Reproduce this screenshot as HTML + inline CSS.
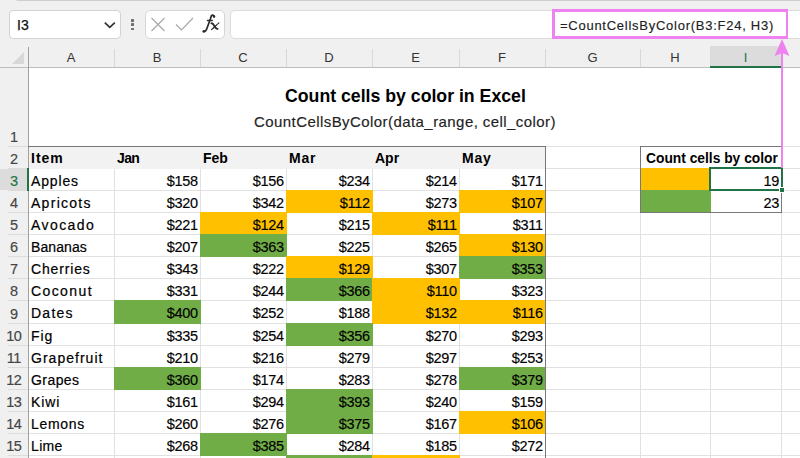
<!DOCTYPE html><html><head><meta charset="utf-8"><style>
*{margin:0;padding:0;box-sizing:border-box}
html,body{width:800px;height:458px;overflow:hidden;background:#f0f0f0;font-family:"Liberation Sans",sans-serif;position:relative}
.a{position:absolute}
.t{position:absolute;white-space:pre;line-height:1}
.cell{font-size:14px;letter-spacing:0.95px;color:#000;-webkit-text-stroke:0.2px #000}
.num{font-size:14.5px;letter-spacing:-0.3px;color:#000;text-align:right;-webkit-text-stroke:0.15px #000}
.hl{background:#e1e1e1}
</style></head><body>
<div class="a" style="left:14px;top:-6px;width:800px;height:7px;background:#fafafa;border:1px solid #cfcfcf;border-radius:6px"></div>
<div class="a" style="left:9px;top:10px;width:112px;height:29px;background:#fff;border:1px solid #d2d2d2;border-radius:4px"></div>
<div class="t" style="left:17px;top:18px;font-size:14px;color:#111;-webkit-text-stroke:0.25px #111">I3</div>
<svg class="a" style="left:103px;top:20px" width="14" height="10"><path d="M1.8 2.6 L6.8 7.4 L11.8 2.6" fill="none" stroke="#333" stroke-width="1.7"/></svg>
<div class="a" style="left:131.2px;top:19px;width:2.6px;height:2.6px;background:#707070;border-radius:0.5px"></div>
<div class="a" style="left:131.2px;top:23.3px;width:2.6px;height:2.6px;background:#707070;border-radius:0.5px"></div>
<div class="a" style="left:131.2px;top:27.6px;width:2.6px;height:2.6px;background:#707070;border-radius:0.5px"></div>
<div class="a" style="left:145px;top:10px;width:80px;height:29px;background:#fff;border:1px solid #d6d6d6;border-radius:5px"></div>
<svg class="a" style="left:150px;top:17px" width="16" height="15"><path d="M1.5 1 L14.5 14 M14.5 1 L1.5 14" stroke="#a8a8a8" stroke-width="1.2" fill="none"/></svg>
<svg class="a" style="left:175px;top:17px" width="19" height="14"><path d="M1 7.5 L6.5 13 L18 1" stroke="#a8a8a8" stroke-width="1.2" fill="none"/></svg>
<svg class="a" style="left:198px;top:10px" width="28" height="26"><g fill="none" stroke="#2b2b2b" stroke-linecap="round"><path d="M16.2 6.6 C15.9 5.2 14.8 4.7 13.9 5.3 C13.1 5.9 12.8 7.2 12.5 8.5 L9.0 18.3 C8.2 20.6 7.1 22.0 5.5 21.7" stroke-width="1.7"/><path d="M9.4 10.5 L14.3 10.5" stroke-width="1.3"/><path d="M13.4 13.3 C14.6 13.0 15.2 13.8 16.0 15.4 C17.0 17.4 17.9 19.2 19.6 18.9" stroke-width="1.9"/><path d="M20.9 12.9 C18.6 14.8 16.3 17.4 13.5 19.6" stroke-width="1.2"/></g><circle cx="16.0" cy="6.6" r="1.25" fill="#2b2b2b"/><circle cx="5.8" cy="21.2" r="1.2" fill="#2b2b2b"/></svg>
<div class="a" style="left:230px;top:10px;width:590px;height:29px;background:#fff;border:1px solid #dcdcdc;border-radius:5px"></div>
<div class="t" style="left:560px;top:19px;font-size:13px;letter-spacing:0.74px;color:#222;-webkit-text-stroke:0.15px #222">=CountCellsByColor(B3:F24, H3)</div>
<div class="a" style="left:552px;top:9px;width:236px;height:30px;border:3px solid #ee82ee;border-right-width:2.5px"></div>
<div class="a" style="left:710px;top:46px;width:71px;height:21px;background:#dcdcdc"></div>
<div class="t" style="left:28px;width:86px;top:51px;text-align:center;font-size:13px;color:#333">A</div>
<div class="a" style="left:114px;top:49px;width:1px;height:18px;background:#d8d8d8"></div>
<div class="t" style="left:114px;width:86px;top:51px;text-align:center;font-size:13px;color:#333">B</div>
<div class="a" style="left:200px;top:49px;width:1px;height:18px;background:#d8d8d8"></div>
<div class="t" style="left:200px;width:86px;top:51px;text-align:center;font-size:13px;color:#333">C</div>
<div class="a" style="left:286px;top:49px;width:1px;height:18px;background:#d8d8d8"></div>
<div class="t" style="left:286px;width:86px;top:51px;text-align:center;font-size:13px;color:#333">D</div>
<div class="a" style="left:372px;top:49px;width:1px;height:18px;background:#d8d8d8"></div>
<div class="t" style="left:372px;width:87px;top:51px;text-align:center;font-size:13px;color:#333">E</div>
<div class="a" style="left:459px;top:49px;width:1px;height:18px;background:#d8d8d8"></div>
<div class="t" style="left:459px;width:86px;top:51px;text-align:center;font-size:13px;color:#333">F</div>
<div class="a" style="left:545px;top:49px;width:1px;height:18px;background:#d8d8d8"></div>
<div class="t" style="left:545px;width:95px;top:51px;text-align:center;font-size:13px;color:#333">G</div>
<div class="a" style="left:640px;top:49px;width:1px;height:18px;background:#d8d8d8"></div>
<div class="t" style="left:640px;width:70px;top:51px;text-align:center;font-size:13px;color:#333">H</div>
<div class="a" style="left:710px;top:49px;width:1px;height:18px;background:#d8d8d8"></div>
<div class="t" style="left:710px;width:71px;top:51px;text-align:center;font-size:13px;color:#217346">I</div>
<svg class="a" style="left:10px;top:50px" width="16" height="16"><path d="M14 2 L14 14 L2 14 Z" fill="#d8d8d8"/></svg>
<div class="a" style="left:0;top:67px;width:800px;height:1px;background:#bdbdbd"></div>
<div class="a" style="left:710px;top:66px;width:72px;height:2px;background:#217346"></div>
<div class="a" style="left:28px;top:68px;width:772px;height:390px;background:#fff"></div>
<div class="a" style="left:8px;top:146px;width:20px;height:1px;background:#dcdcdc"></div>
<div class="t" style="left:-0.3px;width:28px;top:129.7px;text-align:center;font-size:14.5px;letter-spacing:-0.6px;color:#444;-webkit-text-stroke:0.15px #444">1</div>
<div class="a" style="left:8px;top:168px;width:20px;height:1px;background:#dcdcdc"></div>
<div class="t" style="left:-0.3px;width:28px;top:151.7px;text-align:center;font-size:14.5px;letter-spacing:-0.6px;color:#444;-webkit-text-stroke:0.15px #444">2</div>
<div class="a" style="left:0;top:169px;width:28px;height:21px;background:#dcdcdc"></div>
<div class="a" style="left:8px;top:190px;width:20px;height:1px;background:#dcdcdc"></div>
<div class="t" style="left:-0.3px;width:28px;top:173.7px;text-align:center;font-size:14.5px;letter-spacing:-0.6px;color:#217346;-webkit-text-stroke:0.15px #217346">3</div>
<div class="a" style="left:8px;top:212px;width:20px;height:1px;background:#dcdcdc"></div>
<div class="t" style="left:-0.3px;width:28px;top:195.7px;text-align:center;font-size:14.5px;letter-spacing:-0.6px;color:#444;-webkit-text-stroke:0.15px #444">4</div>
<div class="a" style="left:8px;top:234px;width:20px;height:1px;background:#dcdcdc"></div>
<div class="t" style="left:-0.3px;width:28px;top:217.7px;text-align:center;font-size:14.5px;letter-spacing:-0.6px;color:#444;-webkit-text-stroke:0.15px #444">5</div>
<div class="a" style="left:8px;top:256px;width:20px;height:1px;background:#dcdcdc"></div>
<div class="t" style="left:-0.3px;width:28px;top:239.7px;text-align:center;font-size:14.5px;letter-spacing:-0.6px;color:#444;-webkit-text-stroke:0.15px #444">6</div>
<div class="a" style="left:8px;top:278px;width:20px;height:1px;background:#dcdcdc"></div>
<div class="t" style="left:-0.3px;width:28px;top:261.7px;text-align:center;font-size:14.5px;letter-spacing:-0.6px;color:#444;-webkit-text-stroke:0.15px #444">7</div>
<div class="a" style="left:8px;top:300px;width:20px;height:1px;background:#dcdcdc"></div>
<div class="t" style="left:-0.3px;width:28px;top:283.7px;text-align:center;font-size:14.5px;letter-spacing:-0.6px;color:#444;-webkit-text-stroke:0.15px #444">8</div>
<div class="a" style="left:8px;top:323px;width:20px;height:1px;background:#dcdcdc"></div>
<div class="t" style="left:-0.3px;width:28px;top:306.7px;text-align:center;font-size:14.5px;letter-spacing:-0.6px;color:#444;-webkit-text-stroke:0.15px #444">9</div>
<div class="a" style="left:8px;top:345px;width:20px;height:1px;background:#dcdcdc"></div>
<div class="t" style="left:-0.3px;width:28px;top:328.7px;text-align:center;font-size:14.5px;letter-spacing:-0.6px;color:#444;-webkit-text-stroke:0.15px #444">10</div>
<div class="a" style="left:8px;top:367px;width:20px;height:1px;background:#dcdcdc"></div>
<div class="t" style="left:-0.3px;width:28px;top:350.7px;text-align:center;font-size:14.5px;letter-spacing:-0.6px;color:#444;-webkit-text-stroke:0.15px #444">11</div>
<div class="a" style="left:8px;top:389px;width:20px;height:1px;background:#dcdcdc"></div>
<div class="t" style="left:-0.3px;width:28px;top:372.7px;text-align:center;font-size:14.5px;letter-spacing:-0.6px;color:#444;-webkit-text-stroke:0.15px #444">12</div>
<div class="a" style="left:8px;top:411px;width:20px;height:1px;background:#dcdcdc"></div>
<div class="t" style="left:-0.3px;width:28px;top:394.7px;text-align:center;font-size:14.5px;letter-spacing:-0.6px;color:#444;-webkit-text-stroke:0.15px #444">13</div>
<div class="a" style="left:8px;top:433px;width:20px;height:1px;background:#dcdcdc"></div>
<div class="t" style="left:-0.3px;width:28px;top:416.7px;text-align:center;font-size:14.5px;letter-spacing:-0.6px;color:#444;-webkit-text-stroke:0.15px #444">14</div>
<div class="a" style="left:8px;top:455px;width:20px;height:1px;background:#dcdcdc"></div>
<div class="t" style="left:-0.3px;width:28px;top:438.7px;text-align:center;font-size:14.5px;letter-spacing:-0.6px;color:#444;-webkit-text-stroke:0.15px #444">15</div>
<div class="a" style="left:28px;top:146px;width:772px;height:1px;background:#e1e1e1"></div>
<div class="a" style="left:28px;top:168px;width:772px;height:1px;background:#e1e1e1"></div>
<div class="a" style="left:28px;top:190px;width:772px;height:1px;background:#e1e1e1"></div>
<div class="a" style="left:28px;top:212px;width:772px;height:1px;background:#e1e1e1"></div>
<div class="a" style="left:28px;top:234px;width:772px;height:1px;background:#e1e1e1"></div>
<div class="a" style="left:28px;top:256px;width:772px;height:1px;background:#e1e1e1"></div>
<div class="a" style="left:28px;top:278px;width:772px;height:1px;background:#e1e1e1"></div>
<div class="a" style="left:28px;top:300px;width:772px;height:1px;background:#e1e1e1"></div>
<div class="a" style="left:28px;top:323px;width:772px;height:1px;background:#e1e1e1"></div>
<div class="a" style="left:28px;top:345px;width:772px;height:1px;background:#e1e1e1"></div>
<div class="a" style="left:28px;top:367px;width:772px;height:1px;background:#e1e1e1"></div>
<div class="a" style="left:28px;top:389px;width:772px;height:1px;background:#e1e1e1"></div>
<div class="a" style="left:28px;top:411px;width:772px;height:1px;background:#e1e1e1"></div>
<div class="a" style="left:28px;top:433px;width:772px;height:1px;background:#e1e1e1"></div>
<div class="a" style="left:28px;top:455px;width:772px;height:1px;background:#e1e1e1"></div>
<div class="a" style="left:114px;top:68px;width:1px;height:390px;background:#e1e1e1"></div>
<div class="a" style="left:200px;top:68px;width:1px;height:390px;background:#e1e1e1"></div>
<div class="a" style="left:286px;top:68px;width:1px;height:390px;background:#e1e1e1"></div>
<div class="a" style="left:372px;top:68px;width:1px;height:390px;background:#e1e1e1"></div>
<div class="a" style="left:459px;top:68px;width:1px;height:390px;background:#e1e1e1"></div>
<div class="a" style="left:545px;top:68px;width:1px;height:390px;background:#e1e1e1"></div>
<div class="a" style="left:640px;top:68px;width:1px;height:390px;background:#e1e1e1"></div>
<div class="a" style="left:710px;top:68px;width:1px;height:390px;background:#e1e1e1"></div>
<div class="a" style="left:781px;top:68px;width:1px;height:390px;background:#e1e1e1"></div>
<div class="a" style="left:28px;top:47px;width:1px;height:411px;background:#a0a0a0"></div>
<div class="a" style="left:29px;top:68px;width:771px;height:78px;background:#fff"></div>
<div class="t" style="left:285px;top:88px;font-size:17.7px;font-weight:bold;color:#000">Count cells by color in Excel</div>
<div class="t" style="left:254px;top:113.5px;font-size:15px;letter-spacing:0.43px;color:#222;-webkit-text-stroke:0.15px #222">CountCellsByColor(data_range, cell_color)</div>
<div class="a" style="left:29px;top:147px;width:516px;height:22px;background:#f2f2f2"></div>
<div class="t" style="left:31px;top:151px;font-size:14px;font-weight:bold;color:#000;letter-spacing:1.0px">Item</div>
<div class="t" style="left:117px;top:151px;font-size:14px;font-weight:bold;color:#000;letter-spacing:-0.6px">Jan</div>
<div class="t" style="left:203px;top:151px;font-size:14px;font-weight:bold;color:#000;letter-spacing:0px">Feb</div>
<div class="t" style="left:289px;top:151px;font-size:14px;font-weight:bold;color:#000;letter-spacing:0.8px">Mar</div>
<div class="t" style="left:375px;top:151px;font-size:14px;font-weight:bold;color:#000;letter-spacing:0px">Apr</div>
<div class="t" style="left:462px;top:151px;font-size:14px;font-weight:bold;color:#000;letter-spacing:0.8px">May</div>
<div class="t cell" style="left:31px;top:174px;letter-spacing:0.85px">Apples</div>
<div class="t num" style="left:114px;width:83.7px;top:173.5px">$158</div>
<div class="t num" style="left:200px;width:83.7px;top:173.5px">$156</div>
<div class="t num" style="left:286px;width:83.7px;top:173.5px">$234</div>
<div class="t num" style="left:372px;width:84.7px;top:173.5px">$214</div>
<div class="t num" style="left:459px;width:83.7px;top:173.5px">$171</div>
<div class="t cell" style="left:31px;top:196px;letter-spacing:1.28px">Apricots</div>
<div class="t num" style="left:114px;width:83.7px;top:195.5px">$320</div>
<div class="t num" style="left:200px;width:83.7px;top:195.5px">$342</div>
<div class="a" style="left:286px;top:190px;width:87px;height:23px;background:#ffc000"></div>
<div class="t num" style="left:286px;width:83.7px;top:195.5px">$112</div>
<div class="t num" style="left:372px;width:84.7px;top:195.5px">$273</div>
<div class="a" style="left:459px;top:190px;width:87px;height:23px;background:#ffc000"></div>
<div class="t num" style="left:459px;width:83.7px;top:195.5px">$107</div>
<div class="t cell" style="left:31px;top:218px;letter-spacing:1.43px">Avocado</div>
<div class="t num" style="left:114px;width:83.7px;top:217.5px">$221</div>
<div class="a" style="left:200px;top:212px;width:87px;height:23px;background:#ffc000"></div>
<div class="t num" style="left:200px;width:83.7px;top:217.5px">$124</div>
<div class="t num" style="left:286px;width:83.7px;top:217.5px">$215</div>
<div class="a" style="left:372px;top:212px;width:88px;height:23px;background:#ffc000"></div>
<div class="t num" style="left:372px;width:84.7px;top:217.5px">$111</div>
<div class="t num" style="left:459px;width:83.7px;top:217.5px">$311</div>
<div class="t cell" style="left:31px;top:240px;letter-spacing:0.1px">Bananas</div>
<div class="t num" style="left:114px;width:83.7px;top:239.5px">$207</div>
<div class="a" style="left:200px;top:234px;width:87px;height:23px;background:#70ad47"></div>
<div class="t num" style="left:200px;width:83.7px;top:239.5px">$363</div>
<div class="t num" style="left:286px;width:83.7px;top:239.5px">$225</div>
<div class="t num" style="left:372px;width:84.7px;top:239.5px">$265</div>
<div class="a" style="left:459px;top:234px;width:87px;height:23px;background:#ffc000"></div>
<div class="t num" style="left:459px;width:83.7px;top:239.5px">$130</div>
<div class="t cell" style="left:31px;top:262px;letter-spacing:0.85px">Cherries</div>
<div class="t num" style="left:114px;width:83.7px;top:261.5px">$343</div>
<div class="t num" style="left:200px;width:83.7px;top:261.5px">$222</div>
<div class="a" style="left:286px;top:256px;width:87px;height:23px;background:#ffc000"></div>
<div class="t num" style="left:286px;width:83.7px;top:261.5px">$129</div>
<div class="t num" style="left:372px;width:84.7px;top:261.5px">$307</div>
<div class="a" style="left:459px;top:256px;width:87px;height:23px;background:#70ad47"></div>
<div class="t num" style="left:459px;width:83.7px;top:261.5px">$353</div>
<div class="t cell" style="left:31px;top:284px;letter-spacing:1.4px">Coconut</div>
<div class="t num" style="left:114px;width:83.7px;top:283.5px">$331</div>
<div class="t num" style="left:200px;width:83.7px;top:283.5px">$244</div>
<div class="a" style="left:286px;top:278px;width:87px;height:23px;background:#70ad47"></div>
<div class="t num" style="left:286px;width:83.7px;top:283.5px">$366</div>
<div class="a" style="left:372px;top:278px;width:88px;height:23px;background:#ffc000"></div>
<div class="t num" style="left:372px;width:84.7px;top:283.5px">$110</div>
<div class="t num" style="left:459px;width:83.7px;top:283.5px">$323</div>
<div class="t cell" style="left:31px;top:306px;letter-spacing:1.25px">Dates</div>
<div class="a" style="left:114px;top:300px;width:87px;height:24px;background:#70ad47"></div>
<div class="t num" style="left:114px;width:83.7px;top:305.5px">$400</div>
<div class="t num" style="left:200px;width:83.7px;top:305.5px">$252</div>
<div class="t num" style="left:286px;width:83.7px;top:305.5px">$188</div>
<div class="a" style="left:372px;top:300px;width:88px;height:24px;background:#ffc000"></div>
<div class="t num" style="left:372px;width:84.7px;top:305.5px">$132</div>
<div class="a" style="left:459px;top:300px;width:87px;height:24px;background:#ffc000"></div>
<div class="t num" style="left:459px;width:83.7px;top:305.5px">$116</div>
<div class="t cell" style="left:31px;top:329px;letter-spacing:0.95px">Fig</div>
<div class="t num" style="left:114px;width:83.7px;top:328.5px">$335</div>
<div class="t num" style="left:200px;width:83.7px;top:328.5px">$254</div>
<div class="a" style="left:286px;top:323px;width:87px;height:23px;background:#70ad47"></div>
<div class="t num" style="left:286px;width:83.7px;top:328.5px">$356</div>
<div class="t num" style="left:372px;width:84.7px;top:328.5px">$270</div>
<div class="t num" style="left:459px;width:83.7px;top:328.5px">$293</div>
<div class="t cell" style="left:31px;top:351px;letter-spacing:1.02px">Grapefruit</div>
<div class="t num" style="left:114px;width:83.7px;top:350.5px">$210</div>
<div class="t num" style="left:200px;width:83.7px;top:350.5px">$216</div>
<div class="t num" style="left:286px;width:83.7px;top:350.5px">$279</div>
<div class="t num" style="left:372px;width:84.7px;top:350.5px">$297</div>
<div class="t num" style="left:459px;width:83.7px;top:350.5px">$253</div>
<div class="t cell" style="left:31px;top:373px;letter-spacing:0.43px">Grapes</div>
<div class="a" style="left:114px;top:367px;width:87px;height:23px;background:#70ad47"></div>
<div class="t num" style="left:114px;width:83.7px;top:372.5px">$360</div>
<div class="t num" style="left:200px;width:83.7px;top:372.5px">$174</div>
<div class="t num" style="left:286px;width:83.7px;top:372.5px">$283</div>
<div class="t num" style="left:372px;width:84.7px;top:372.5px">$278</div>
<div class="a" style="left:459px;top:367px;width:87px;height:23px;background:#70ad47"></div>
<div class="t num" style="left:459px;width:83.7px;top:372.5px">$379</div>
<div class="t cell" style="left:31px;top:395px;letter-spacing:0.88px">Kiwi</div>
<div class="t num" style="left:114px;width:83.7px;top:394.5px">$161</div>
<div class="t num" style="left:200px;width:83.7px;top:394.5px">$294</div>
<div class="a" style="left:286px;top:389px;width:87px;height:23px;background:#70ad47"></div>
<div class="t num" style="left:286px;width:83.7px;top:394.5px">$393</div>
<div class="t num" style="left:372px;width:84.7px;top:394.5px">$240</div>
<div class="t num" style="left:459px;width:83.7px;top:394.5px">$159</div>
<div class="t cell" style="left:31px;top:417px;letter-spacing:0.67px">Lemons</div>
<div class="t num" style="left:114px;width:83.7px;top:416.5px">$260</div>
<div class="t num" style="left:200px;width:83.7px;top:416.5px">$276</div>
<div class="a" style="left:286px;top:411px;width:87px;height:23px;background:#70ad47"></div>
<div class="t num" style="left:286px;width:83.7px;top:416.5px">$375</div>
<div class="t num" style="left:372px;width:84.7px;top:416.5px">$167</div>
<div class="a" style="left:459px;top:411px;width:87px;height:23px;background:#ffc000"></div>
<div class="t num" style="left:459px;width:83.7px;top:416.5px">$106</div>
<div class="t cell" style="left:31px;top:439px;letter-spacing:0.35px">Lime</div>
<div class="t num" style="left:114px;width:83.7px;top:438.5px">$268</div>
<div class="a" style="left:200px;top:433px;width:87px;height:23px;background:#70ad47"></div>
<div class="t num" style="left:200px;width:83.7px;top:438.5px">$385</div>
<div class="t num" style="left:286px;width:83.7px;top:438.5px">$284</div>
<div class="t num" style="left:372px;width:84.7px;top:438.5px">$185</div>
<div class="t num" style="left:459px;width:83.7px;top:438.5px">$272</div>
<div class="a" style="left:286px;top:455px;width:87px;height:3px;background:#70ad47"></div>
<div class="a" style="left:372px;top:455px;width:88px;height:3px;background:#ffc000"></div>
<div class="a" style="left:28px;top:146px;width:518px;height:320px;border:1px solid #777;border-left:none;border-bottom:none"></div>
<div class="a" style="left:641px;top:147px;width:140px;height:21px;background:#fff"></div>
<div class="a" style="left:640px;top:168px;width:71px;height:23px;background:#ffc000"></div>
<div class="a" style="left:640px;top:190px;width:71px;height:23px;background:#70ad47"></div>
<div class="t" style="left:646px;top:152px;font-size:13.8px;font-weight:bold;color:#000">Count cells by color</div>
<div class="t num" style="left:710px;width:69px;top:173.5px">19</div>
<div class="t num" style="left:710px;width:69px;top:195.5px">23</div>
<div class="a" style="left:640px;top:146px;width:142px;height:67px;border:1px solid #777"></div>
<div class="a" style="left:709px;top:167px;width:74px;height:24px;border:2px solid #217346"></div>
<div class="a" style="left:779px;top:187px;width:6px;height:6px;background:#217346;border:1px solid #fff"></div>
<div class="a" style="left:27px;top:168px;width:2px;height:23px;background:#217346"></div>
<div class="a" style="left:781px;top:50px;width:2px;height:118px;background:#ee82ee"></div>
<svg class="a" style="left:774px;top:39px" width="16" height="18"><path d="M8 0 L15.5 17 L8 14 L0.5 17 Z" fill="#ee82ee"/></svg>
</body></html>
